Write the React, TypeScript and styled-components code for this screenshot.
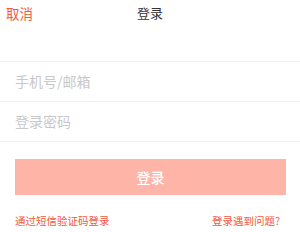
import React from "react";
import styled, { createGlobalStyle } from "styled-components";

const Global = createGlobalStyle`
  html, body { margin: 0; padding: 0; background: #fff; }
  body { font-family: "Noto Sans CJK SC", "Liberation Sans", sans-serif; }
  * { box-sizing: border-box; }
`;

const Page = styled.div`
  width: 300px;
  height: 232px;
  background: #fff;
  display: flex;
  flex-direction: column;
`;

const Header = styled.div`
  height: 25px;
  display: grid;
  grid-template-columns: 1fr auto 1fr;
  align-items: center;
  padding: 0 6px;
`;

const Cancel = styled.span`
  font-size: 13.5px;
  color: #f4583d;
  justify-self: start;
`;

const Title = styled.span`
  font-size: 13px;
  color: #333;
`;

const Form = styled.div`
  margin-top: 36px;
  border-top: 1px solid #f0f0f0;
`;

const Row = styled.div`
  height: 40px;
  display: flex;
  align-items: center;
  padding-left: 15px;
  padding-bottom: 2px;
  border-bottom: 1px solid #f0f0f0;
`;

const Placeholder = styled.span`
  font-size: 14px;
  color: #c8c8c8;
`;

const Button = styled.div`
  margin: 17px 14px 0 15px;
  height: 36px;
  background: #ffb4a8;
  color: #fff;
  font-size: 14px;
  font-weight: 500;
  display: flex;
  align-items: center;
  justify-content: center;
`;

const Links = styled.div`
  margin-top: 18px;
  padding: 0 20px 0 15px;
  display: flex;
  justify-content: space-between;
  align-items: center;
`;

const Link = styled.span`
  font-size: 10.5px;
  color: #f4583d;
`;

export default function App() {
  return (
    <Page>
      <Global />
      <Header>
        <Cancel>取消</Cancel>
        <Title>登录</Title>
        <span />
      </Header>
      <Form>
        <Row>
          <Placeholder>手机号/邮箱</Placeholder>
        </Row>
        <Row>
          <Placeholder>登录密码</Placeholder>
        </Row>
      </Form>
      <Button>登录</Button>
      <Links>
        <Link>通过短信验证码登录</Link>
        <Link>登录遇到问题?</Link>
      </Links>
    </Page>
  );
}
